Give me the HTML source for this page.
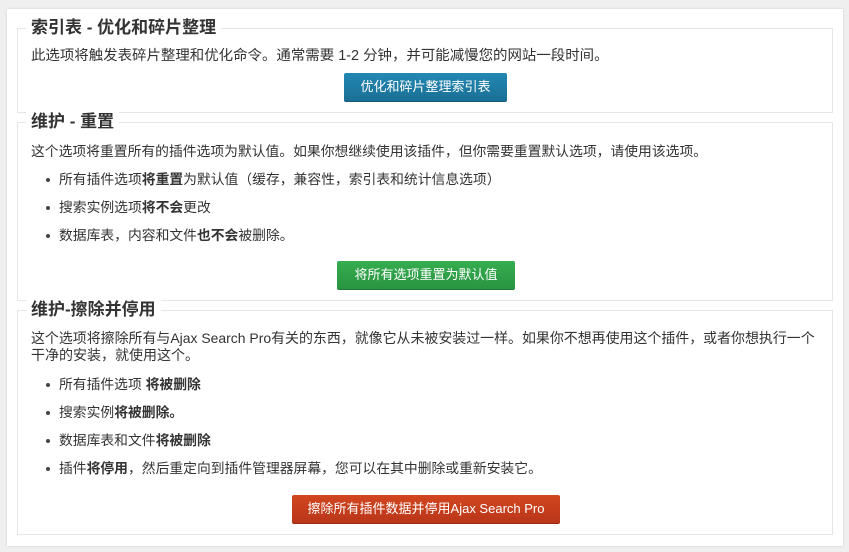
<!DOCTYPE html>
<html><head><meta charset="utf-8"><style>
body{margin:0;width:849px;height:552px;background:#efefef;font-family:"Liberation Sans","Noto Sans CJK SC",sans-serif;color:#333;position:relative;overflow:hidden}
.panel{position:absolute;left:7px;top:9px;width:836px;height:537px;background:#fff;box-shadow:0 0 2px rgba(0,0,0,.15)}
.fs{position:absolute;left:17px;width:816px;border:1px solid #e6e6e6;box-sizing:border-box}
.lg{position:absolute;left:26px;padding:0 5px;background:#fff;font-size:17px;font-weight:bold;color:#333;line-height:20px}
.t{position:absolute;left:31px;font-size:14px;line-height:17px;white-space:nowrap}
.b{position:absolute;left:59px;font-size:13.8px;line-height:17px;white-space:nowrap}
.b:before{content:"";position:absolute;left:-13px;top:7px;width:4px;height:4px;border-radius:50%;background:#444}
.btn{position:absolute;color:#fff;font-size:13px;text-align:center;line-height:28px;border-radius:2px;height:28px}
</style></head><body>
<div class="panel"></div>
<div class="fs" style="top:28px;height:85px"></div>
<div class="lg" style="top:18px">索引表 - 优化和碎片整理</div>
<div class="t" style="top:48px;font-size:14.45px">此选项将触发表碎片整理和优化命令。通常需要 1-2 分钟，并可能减慢您的网站一段时间。</div>
<div class="btn" style="left:344px;top:73px;width:163px;background:linear-gradient(#2388b3,#1a6f95);border-bottom:1px solid #155a7a">优化和碎片整理索引表</div>

<div class="fs" style="top:122px;height:179px"></div>
<div class="lg" style="top:112px">维护 - 重置</div>
<div class="t" style="top:143px;font-size:13.8px">这个选项将重置所有的插件选项为默认值。如果你想继续使用该插件，但你需要重置默认选项，请使用该选项。</div>
<div class="b" style="top:171px">所有插件选项<b>将重置</b>为默认值（缓存，兼容性，索引表和统计信息选项）</div>
<div class="b" style="top:199px">搜索实例选项<b>将不会</b>更改</div>
<div class="b" style="top:227px">数据库表，内容和文件<b>也不会</b>被删除。</div>
<div class="btn" style="left:337px;top:261px;width:178px;background:linear-gradient(#35ad4f,#2a9442);border-bottom:1px solid #1f7a34">将所有选项重置为默认值</div>

<div class="fs" style="top:310px;height:225px"></div>
<div class="lg" style="top:300px">维护-擦除并停用</div>
<div class="t" style="top:330px;font-size:13.95px">这个选项将擦除所有与Ajax Search Pro有关的东西，就像它从未被安装过一样。如果你不想再使用这个插件，或者你想执行一个</div>
<div class="t" style="top:347px">干净的安装，就使用这个。</div>
<div class="b" style="top:376px">所有插件选项 <b>将被删除</b></div>
<div class="b" style="top:404px">搜索实例<b>将被删除。</b></div>
<div class="b" style="top:432px">数据库表和文件<b>将被删除</b></div>
<div class="b" style="top:460px">插件<b>将停用</b>，然后重定向到插件管理器屏幕，您可以在其中删除或重新安装它。</div>
<div class="btn" style="left:292px;top:495px;width:268px;background:linear-gradient(#d2461f,#b9361a);border-bottom:1px solid #962a12">擦除所有插件数据并停用Ajax Search Pro</div>
</body></html>
